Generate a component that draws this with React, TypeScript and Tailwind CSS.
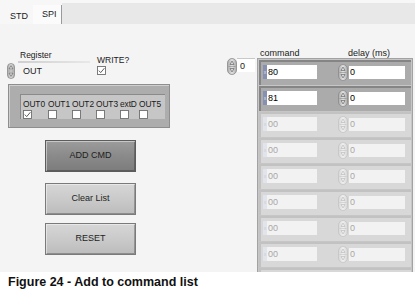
import React from "react";

type Row = { cmd: string; delay: string; active: boolean };

// last element is cut off by the panel edge, so its values are not visible
const rows: Row[] = [
  { cmd: "80", delay: "0", active: true },
  { cmd: "81", delay: "0", active: true },
  { cmd: "00", delay: "0", active: false },
  { cmd: "00", delay: "0", active: false },
  { cmd: "00", delay: "0", active: false },
  { cmd: "00", delay: "0", active: false },
  { cmd: "00", delay: "0", active: false },
  { cmd: "00", delay: "0", active: false },
  { cmd: "", delay: "", active: false },
];

const outputs = [
  { label: "OUT0", width: "w-[25px]", checked: true },
  { label: "OUT1", width: "w-[24px]", checked: false },
  { label: "OUT2", width: "w-[24px]", checked: false },
  { label: "OUT3", width: "w-[24px]", checked: false },
  { label: "extD", width: "w-[19px]", checked: false },
  { label: "OUT5", width: "w-[23px]", checked: false },
];

function Spin({ dim = false, w = 10, h = 17 }: { dim?: boolean; w?: number; h?: number }) {
  const stroke = dim ? "#c4c4c4" : "#8a8a8a";
  const fillA = dim ? "#f0f0f0" : "#e4e4e4";
  const fillB = dim ? "#d6d6d6" : "#a9a9a9";
  const id = `sg-${dim ? "d" : "a"}-${w}-${h}`;
  const cx = w / 2;
  return (
    <svg width={w} height={h} viewBox={`0 0 ${w} ${h}`} className="shrink-0">
      <defs>
        <linearGradient id={id} x1="0" y1="0" x2="1" y2="0">
          <stop offset="0" stopColor={fillB} />
          <stop offset="0.5" stopColor={fillA} />
          <stop offset="1" stopColor={fillB} />
        </linearGradient>
      </defs>
      <rect x="0.5" y="0.5" width={w - 1} height={h - 1} rx={w / 2 - 0.5} fill={`url(#${id})`} stroke={stroke} strokeWidth="0.8" />
      <line x1="1.5" y1={h / 2} x2={w - 1.5} y2={h / 2} stroke={stroke} strokeWidth="0.6" />
      <path d={`M${cx - 2} ${h / 2 - 2} L${cx} ${h / 2 - 5.5} L${cx + 2} ${h / 2 - 2} Z`} fill="none" stroke={dim ? "#bdbdbd" : "#6a6a6a"} strokeWidth="0.7" />
      <path d={`M${cx - 2} ${h / 2 + 2} L${cx} ${h / 2 + 5.5} L${cx + 2} ${h / 2 + 2} Z`} fill="none" stroke={dim ? "#bdbdbd" : "#6a6a6a"} strokeWidth="0.7" />
    </svg>
  );
}

function Check({ checked }: { checked: boolean }) {
  return (
    <svg width="9" height="9" viewBox="0 0 9 9" className="shrink-0">
      <rect x="0.5" y="0.5" width="8" height="8" fill="#ffffff" stroke="#6e6e6e" strokeWidth="0.9" />
      {checked && <path d="M1.8 4.6 L3.7 6.6 L7.4 2.2" fill="none" stroke="#4a4a4a" strokeWidth="0.9" />}
    </svg>
  );
}

function ArrayRow({ row }: { row: Row }) {
  return (
    <div
      className={
        row.active
          ? "mb-[1px] flex h-[25px] items-start border-l-2 border-t-2 border-[#858585] bg-[#ababab] pl-[2px]"
          : "mb-[1px] flex h-[25px] items-start border-l-2 border-t-2 border-[#c2c2c2] bg-[#d8d8d8] pl-[2px]"
      }
    >
      <div className="mt-[3px] flex h-[14px]">
        <div
          className={
            row.active
              ? "flex w-[4px] items-center justify-center bg-[#8790b0] text-[5px] leading-none text-[#dde2f0]"
              : "flex w-[4px] items-center justify-center bg-[#e2e4ec] text-[5px] leading-none text-[#c8ccd8]"
          }
        >
          {row.cmd && "x"}
        </div>
        <div
          className={
            row.active
              ? "w-[50px] bg-white pl-[1px] text-[9px] leading-[14px] text-black"
              : "w-[50px] bg-[#f2f2f2] pl-[1px] text-[9px] leading-[14px] text-[#a8a8a8]"
          }
        >
          {row.cmd}
        </div>
      </div>
      <div className="ml-[21px] mt-[2px]">
        <Spin dim={!row.active} w={10} h={17} />
      </div>
      <div
        className={
          row.active
            ? "ml-[1px] mt-[4px] h-[13px] w-[56px] bg-white pl-[1px] text-[9px] leading-[13px] text-black"
            : "ml-[1px] mt-[4px] h-[13px] w-[56px] bg-[#f2f2f2] pl-[1px] text-[9px] leading-[13px] text-[#a8a8a8]"
        }
      >
        {row.delay}
      </div>
    </div>
  );
}

function LvButton({ label, dark = false, className = "" }: { label: string; dark?: boolean; className?: string }) {
  return (
    <div
      className={
        (dark
          ? "border-[#5c5c5c] bg-gradient-to-b from-[#9c9c9c] via-[#8a8a8a] to-[#7c7c7c] "
          : "border-[#7a7a7a] bg-gradient-to-b from-[#d6d6d6] via-[#cacaca] to-[#bcbcbc] ") +
        "ml-[45px] flex h-[32px] w-[91px] items-center justify-center border text-[9px] text-[#1e1e1e] shadow-[inset_1px_1px_0_rgba(255,255,255,0.45),inset_-1px_-1px_0_rgba(0,0,0,0.25)] " +
        className
      }
    >
      {label}
    </div>
  );
}

export default function App() {
  return (
    <div className="relative h-[305px] w-[415px] overflow-hidden bg-white font-['Liberation_Sans',Arial,sans-serif] text-[#1a1a1a]">
      {/* tab strip */}
      <div className="flex h-[24px] bg-[#f7f7f7]">
        <div className="flex w-[62px] items-start">
          <span className="ml-[10px] mt-[11px] text-[9px] leading-[10px]">STD</span>
          <div className="ml-[5px] mt-[5px] flex h-[19px] w-[32px] border-r border-[#9a9a9a] bg-[#fbfbfb] pl-[9px]">
            <span className="mt-[4px] text-[9px] leading-[10px]">SPI</span>
          </div>
        </div>
        <div className="mt-[3px] flex-1 bg-[#e8e8e8]" />
      </div>

      {/* panel */}
      <div className="flex h-[248px] overflow-hidden bg-[#f4f4f4]">
        {/* left controls */}
        <div className="w-[227px] shrink-0 pt-[26px]">
          <div className="flex h-[34px]">
            <div className="ml-[7px] w-[83px]">
              <div className="pl-[13px] text-[8.5px] leading-[10px]">Register</div>
              <div className="ml-[11px] mt-[1px] h-[2px] bg-gradient-to-r from-[#cfcfcf] to-[#e8e8e8]" />
              <div className="flex items-center">
                <Spin w={8} h={16} />
                <span className="ml-[8px] text-[9px] leading-[15px]">OUT</span>
              </div>
            </div>
            <div className="ml-[7px] pt-[5px]">
              <div className="text-[8.5px] leading-[10px]">WRITE?</div>
              <div className="mt-[1px]">
                <Check checked />
              </div>
            </div>
          </div>

          <div className="ml-[8px] h-[44px] w-[162px] border border-[#8e8e8e] bg-[#adadad] pl-[11px] pt-[9px] shadow-[inset_1px_1px_0_#cfcfcf]">
            <div className="flex h-[25px] w-[145px] border-l border-t border-[#8a8a8a] bg-[#c6c6c6] pl-[2px] pt-[4px]">
              {outputs.map((o) => (
                <div key={o.label} className={o.width + " shrink-0"}>
                  <div className="whitespace-nowrap text-[8.4px] leading-[10px] tracking-[-0.1px]">{o.label}</div>
                  <div className="mt-[1px]">
                    <Check checked={o.checked} />
                  </div>
                </div>
              ))}
            </div>
          </div>

          <LvButton label="ADD CMD" dark className="mt-[12px]" />
          <LvButton label="Clear List" className="mt-[11px]" />
          <LvButton label="RESET" className="mt-[8px]" />
        </div>

        {/* index */}
        <div className="w-[30px] shrink-0 pt-[34px]">
          <div className="flex">
            <Spin w={10} h={17} />
            <div className="h-[14px] w-[18px] border-t border-[#c8c8c8] bg-white pl-[3px] text-[9px] leading-[14px]">0</div>
          </div>
        </div>

        {/* array */}
        <div className="w-[156px] shrink-0 pt-[24px]">
          <div className="flex h-[10px] text-[9px] leading-[10px]">
            <span className="ml-[3px] w-[88px]">command</span>
            <span>delay (ms)</span>
          </div>
          <div className="border border-[#a2a2a2] bg-[#c6c6c6] px-[1px] pt-[1px]">
            {rows.map((r, i) => (
              <ArrayRow key={i} row={r} />
            ))}
          </div>
        </div>
      </div>

      <div className="pl-[8px] pt-[3px] text-[12.5px] font-bold leading-[14px] text-[#111]">
        Figure 24 - Add to command list
      </div>
    </div>
  );
}
